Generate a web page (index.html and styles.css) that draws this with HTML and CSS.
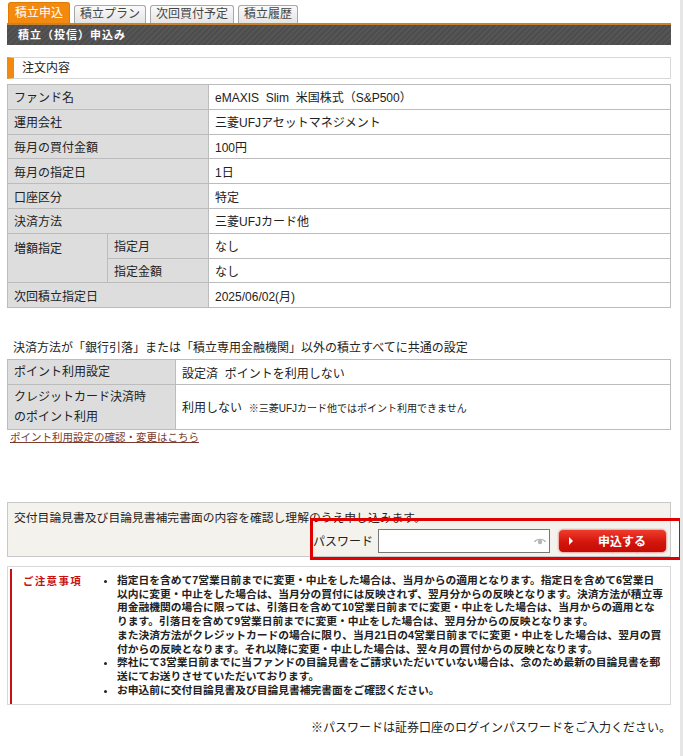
FILE: index.html
```html
<!DOCTYPE html>
<html lang="ja">
<head>
    <meta charset="UTF-8">
    <title>積立（投信）申込み</title>
    <link rel="stylesheet" href="styles.css">
</head>
<body>
<div class="page">
    <ul class="tabs">
        <li class="tab active">積立申込</li>
        <li class="tab">積立プラン</li>
        <li class="tab">次回買付予定</li>
        <li class="tab">積立履歴</li>
    </ul>
    <div class="title-bar">積立（投信）申込み</div>

    <div class="section-head">注文内容</div>

    <table class="order">
        <tr><th colspan="2">ファンド名</th><td>eMAXIS&nbsp; Slim&nbsp; 米国株式（S&amp;P500）</td></tr>
        <tr><th colspan="2">運用会社</th><td>三菱UFJアセットマネジメント</td></tr>
        <tr><th colspan="2">毎月の買付金額</th><td>100円</td></tr>
        <tr><th colspan="2">毎月の指定日</th><td>1日</td></tr>
        <tr><th colspan="2">口座区分</th><td>特定</td></tr>
        <tr><th colspan="2">決済方法</th><td>三菱UFJカード他</td></tr>
        <tr><th rowspan="2" class="top">増額指定</th><th class="sub">指定月</th><td>なし</td></tr>
        <tr><th class="sub">指定金額</th><td>なし</td></tr>
        <tr><th colspan="2">次回積立指定日</th><td>2025/06/02(月)</td></tr>
    </table>

    <p class="common-head">決済方法が「銀行引落」または「積立専用金融機関」以外の積立すべてに共通の設定</p>
    <table class="points">
        <tr><th>ポイント利用設定</th><td>設定済&nbsp; ポイントを利用しない</td></tr>
        <tr class="tall"><th>クレジットカード決済時<br>のポイント利用</th><td>利用しない&nbsp; <span class="small">※三菱UFJカード他ではポイント利用できません</span></td></tr>
    </table>
    <a class="point-link" href="#">ポイント利用設定の確認・変更はこちら</a>

    <div class="confirm">
        <p>交付目論見書及び目論見書補完書面の内容を確認し理解のうえ申し込みます。</p>
        <div class="pw-row">
            <label for="pw">パスワード</label>
            <div class="pw-field">
                <input type="password" id="pw">
                <svg class="eye" width="12" height="8" viewBox="0 0 12 8"><path d="M0.5 5 C2.5 1.5 9.5 1.5 11.5 5" fill="none" stroke="#b5b5b5" stroke-width="1.4"/><circle cx="6" cy="5" r="2.2" fill="#b5b5b5"/></svg>
            </div>
            <button class="submit-btn"><span class="arrow"></span>申込する</button>
        </div>
    </div>
    <div class="highlight"></div>

    <div class="notice">
        <div class="notice-title">ご注意事項</div>
        <ul>
            <li>指定日を含めて7営業日前までに変更・中止をした場合は、当月からの適用となります。指定日を含めて6営業日以内に変更・中止をした場合は、当月分の買付には反映されず、翌月分からの反映となります。決済方法が積立専用金融機関の場合に限っては、引落日を含めて10営業日前までに変更・中止をした場合は、当月からの適用となります。引落日を含めて9営業日前までに変更・中止をした場合は、翌月分からの反映となります。<br>また決済方法がクレジットカードの場合に限り、当月21日の4営業日前までに変更・中止をした場合は、翌月の買付からの反映となります。それ以降に変更・中止した場合は、翌々月の買付からの反映となります。</li>
            <li>弊社にて3営業日前までに当ファンドの目論見書をご請求いただいていない場合は、念のため最新の目論見書を郵送にてお送りさせていただいております。</li>
            <li>お申込前に交付目論見書及び目論見書補完書面をご確認ください。</li>
        </ul>
    </div>

    <p class="pw-note">※パスワードは証券口座のログインパスワードをご入力ください。</p>
</div>
</body>
</html>
```

FILE: styles.css
```css
html, body {
    margin: 0;
    background: #fff;
}
body {
    font-family: "Liberation Sans", "Noto Sans CJK JP", sans-serif;
    font-size: 12px;
    color: #222;
    border-right: 3px solid #e6e6e6;
    width: 680px;
    min-height: 756px;
}
.page {
    position: relative;
    width: 664px;
    padding: 3px 0 0 7px;
}
.tabs {
    display: flex;
    gap: 4px;
    list-style: none;
    margin: 0 0 0 1px;
    padding: 0;
    align-items: flex-end;
    height: 20px;
}
.tab {
    height: 17px;
    line-height: 17px;
    padding: 0 5px;
    background: linear-gradient(#fafafa, #e4e4e4);
    border: 1px solid #a8a8a8;
    border-bottom: none;
    border-radius: 3px 3px 0 0;
    color: #444;
    font-size: 12px;
}
.tab.active {
    height: 20px;
    line-height: 21px;
    padding: 0 6px;
    background: #f28a10;
    border-color: #e07a00;
    color: #fff;
}
.title-bar {
    border-top: 2px solid #c8822f;
    height: 20px;
    line-height: 20px;
    padding-left: 11px;
    color: #fff;
    font-weight: bold;
    font-size: 11px;
    letter-spacing: 1px;
    background: repeating-linear-gradient(135deg, #4d4d4d 0 2px, #555 2px 4px);
}
.section-head {
    margin-top: 12px;
    height: 20px;
    line-height: 20px;
    border: 1px solid #d8d8d8;
    border-left: 7px solid #f28a10;
    padding-left: 8px;
    font-size: 12px;
    color: #222;
}
table {
    border-collapse: collapse;
    width: 664px;
}
th, td {
    border: 1px solid #bcbcbc;
    text-align: left;
    font-weight: normal;
    padding: 0 6px;
    height: 23.8px;
    font-size: 12px;
}
th {
    background: #dddddd;
    color: #222;
}
.order {
    margin-top: 5px;
}
.order th[colspan] {
    width: 188px;
}
.order th.top {
    vertical-align: top;
    padding-top: 5px;
    width: 87px;
}
.order th.sub {
    width: 88px;
}
.common-head {
    margin: 30px 0 4px 6px;
    font-size: 12px;
    color: #222;
}
.points th {
    width: 155px;
    line-height: 20px;
}
.points .tall th, .points .tall td {
    height: 44px;
}
.small {
    font-size: 10px;
}
.point-link {
    display: inline-block;
    margin: 0 0 0 3px;
    font-size: 10.5px;
    line-height: 12px;
    color: #7a3b2e;
}
.confirm {
    margin-top: 58px;
    background: #f4f2ec;
    border: 1px solid #c8c8c8;
    height: 53px;
    padding: 0 6px;
}
.confirm p {
    margin: 5px 0 0;
    font-size: 11.8px;
}
.pw-row {
    display: flex;
    justify-content: flex-end;
    align-items: center;
    gap: 4px;
    margin-top: 4px;
    margin-right: -3px;
}
.pw-row label {
    font-size: 12px;
    margin-right: 1px;
}
.pw-field {
    position: relative;
}
.pw-field input {
    width: 172px;
    height: 24px;
    border: 1px solid #777;
    margin: 0;
    padding: 0 2px;
    box-sizing: border-box;
    background: #fff;
}
.eye {
    position: absolute;
    right: 4px;
    top: 8px;
}
.submit-btn {
    display: flex;
    align-items: center;
    width: 109px;
    height: 24px;
    border: 1px solid #f2b3ad;
    border-radius: 5px;
    background: linear-gradient(#ee3c2c, #d4150c 55%, #c30c06);
    box-shadow: 0 0 0 1px #e8e2dc;
    color: #fff;
    font-weight: bold;
    font-size: 12px;
    padding: 0 0 0 10px;
    font-family: inherit;
    gap: 25px;
    margin-left: 4px;
}
.arrow {
    width: 0;
    height: 0;
    border-left: 4px solid #fff;
    border-top: 4px solid transparent;
    border-bottom: 4px solid transparent;
}
.highlight {
    position: absolute;
    left: 310px;
    top: 518px;
    width: 366px;
    height: 36px;
    border: 3px solid #e00000;
}
.notice {
    display: flex;
    margin-top: 9px;
    border: 1px solid #d8d8d8;
    padding: 7px 6px 6px 0;
    position: relative;
}
.notice::before {
    content: "";
    position: absolute;
    left: 2px;
    top: 2px;
    bottom: 0;
    width: 2px;
    background: #c81010;
}
.notice-title {
    width: 76px;
    padding-left: 15px;
    color: #c81010;
    font-size: 10.5px;
    font-weight: bold;
    letter-spacing: 1.3px;
    flex-shrink: 0;
    line-height: 14px;
}
.notice ul {
    margin: 0;
    padding-left: 18px;
    font-size: 10.75px;
    line-height: 13.75px;
    color: #222;
    font-weight: bold;
}
.pw-note {
    margin: 13px 0 0;
    text-align: right;
    font-size: 12px;
}
```
